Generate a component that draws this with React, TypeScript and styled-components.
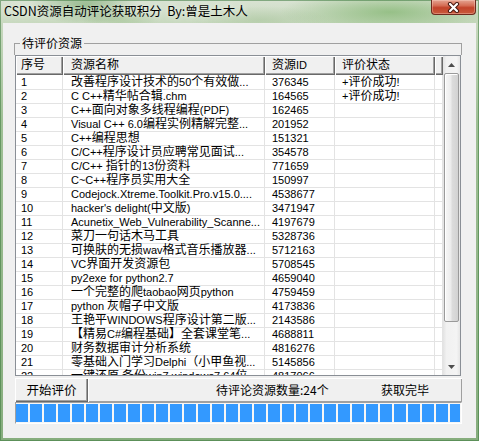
import React from 'react';
import styled, { createGlobalStyle } from 'styled-components';

const GlobalStyle = createGlobalStyle`
  html, body {
    margin: 0;
    padding: 0;
  }

  body {
    width: 479px;
    height: 441px;
    overflow: hidden;
    font-family: "Noto Sans CJK SC", "Liberation Sans", sans-serif;
    font-size: 12px;
    color: #000;
  }
`;

const Window = styled.div`
  width: 479px;
  height: 441px;
  box-sizing: border-box;
  padding: 0 3px 3px;
  display: flex;
  flex-direction: column;
  background:
    radial-gradient(ellipse 55px 18px at 85px 6px, rgba(86, 146, 74, 0.55), transparent),
    radial-gradient(ellipse 40px 12px at 120px 18px, rgba(120, 170, 100, 0.35), transparent),
    radial-gradient(ellipse 110px 22px at 390px 12px, rgba(112, 172, 92, 0.6), transparent),
    radial-gradient(ellipse 70px 14px at 260px 20px, rgba(150, 185, 135, 0.35), transparent),
    linear-gradient(180deg, #d9e3d3 0px, #c8d9bf 23px, #9fc095 120px, #86ad7d 100%);
  box-shadow: inset 0 0 0 1px rgba(58, 120, 60, 0.55);
`;

const TitleBar = styled.div`
  height: 23px;
  display: flex;
  align-items: flex-start;
  flex-shrink: 0;
`;

const Caption = styled.div`
  padding-left: 1px;
  line-height: 22px;
  font-size: 12.5px;
  white-space: pre;
  text-shadow: 0 0 6px rgba(255, 255, 255, 0.9);
`;

const CloseButton = styled.div`
  margin-left: auto;
  width: 45px;
  height: 15px;
  box-sizing: border-box;
  border: 1px solid #6e2a1e;
  border-top: none;
  border-radius: 0 0 4px 4px;
  background: linear-gradient(180deg, #e4a491 0%, #d56d55 40%, #c2432a 55%, #c85a3c 100%);
  box-shadow: inset 0 0 0 1px rgba(255, 220, 210, 0.35);
  display: flex;
  align-items: center;
  justify-content: center;
`;

const Client = styled.div`
  flex: 1;
  background: #f0f0f0;
  display: flex;
  flex-direction: column;
`;

const GroupBox = styled.fieldset`
  margin: 14px 0 0 11px;
  padding: 0 0 6px;
  width: 448px;
  box-sizing: border-box;
  border: 1px solid #a0a0a0;
  border-bottom: none;
  min-width: 0;
`;

const GroupTitle = styled.legend`
  margin-left: 5px;
  padding: 0 2px;
  font-size: 12px;
  line-height: 12px;
`;

const ListView = styled.div`
  margin-left: 12px;
  width: 446px;
  height: 321px;
  box-sizing: border-box;
  border: 1px solid #8a8f96;
  background: #fff;
  display: flex;
  overflow: hidden;
  font-family: "Liberation Sans", "Noto Sans CJK SC", sans-serif;
  font-size: 11px;
`;

const Han = styled.span`
  font-family: "Noto Sans CJK SC", sans-serif;
  font-size: 12px;
  line-height: 10px;
`;

const ListBody = styled.div`
  flex: 1;
  display: flex;
  flex-direction: column;
  overflow: hidden;
`;

const gridColumns = '47px 202px 70px 100px 1fr';

const HeaderRow = styled.div`
  display: grid;
  grid-template-columns: ${gridColumns};
  height: 19px;
  flex-shrink: 0;
`;

const HeadCell = styled.div<{ $pad: number }>`
  padding-left: ${(p) => p.$pad}px;
  background: #f0f0f0;
  box-shadow: inset 1px 1px 0 #ffffff, inset -1px -1px 0 #696969, inset -2px -2px 0 #a0a0a0;
  line-height: 18px;
  white-space: nowrap;
  overflow-x: clip;
  overflow-y: visible;
`;

const Row = styled.div`
  display: grid;
  grid-template-columns: ${gridColumns};
  height: 14px;
  flex-shrink: 0;
`;

const Cell = styled.div<{ $pad: number }>`
  padding-left: ${(p) => p.$pad}px;
  border-right: 1px solid #e3e3e3;
  border-bottom: 1px solid #e3e3e3;
  line-height: 14px;
  white-space: nowrap;
  overflow-x: clip;
  overflow-y: visible;
`;

const ScrollBar = styled.div`
  width: 17px;
  flex-shrink: 0;
  display: flex;
  flex-direction: column;
  background: linear-gradient(90deg, #e2e2e2 0%, #f1f1f1 20%, #f4f4f4 80%, #e6e6e6 100%);
`;

const ArrowButton = styled.div`
  height: 17px;
  display: flex;
  align-items: center;
  justify-content: center;
`;

const Thumb = styled.div`
  height: 249px;
  margin: 0 1px;
  box-sizing: border-box;
  border: 1px solid #9a9a9a;
  border-radius: 2px;
  background: linear-gradient(90deg, #f7f7f7 0%, #ececec 45%, #dcdcdc 55%, #d2d2d2 100%);
  box-shadow: inset 1px 1px 0 #ffffff;
`;

const TrackGap = styled.div`
  flex: 1;
`;

const ActionRow = styled.div`
  margin: 2px 0 0 12px;
  display: flex;
  height: 24px;
`;

const PushButton = styled.div`
  width: 73px;
  box-sizing: border-box;
  background: #f0f0f0;
  box-shadow: inset 1px 1px 0 #ffffff, inset -1px -1px 0 #696969, inset -2px -2px 0 #a0a0a0;
  display: flex;
  align-items: center;
  justify-content: center;
  font-size: 12.5px;
  padding-bottom: 1px;
`;

const StatusPanel = styled.div`
  width: 374px;
  box-sizing: border-box;
  background: #f0f0f0;
  box-shadow: inset 1px 1px 0 #ffffff, inset -1px -1px 0 #a0a0a0;
  display: flex;
  align-items: center;
  font-size: 12px;
  padding-bottom: 1px;
`;

const StatusText = styled.span<{ $left?: string; $right?: string }>`
  margin-left: ${(p) => p.$left ?? '0'};
  margin-right: ${(p) => p.$right ?? '0'};
`;

const Progress = styled.div`
  margin-left: 12px;
  width: 447px;
  height: 22px;
  box-sizing: border-box;
  padding: 1px 1px 1px 0;
  border: 1px solid;
  border-color: #a0a0a0 #ffffff #ffffff #a0a0a0;
  background: #f6f6f6;
`;

const ProgressFill = styled.div`
  height: 100%;
  background: repeating-linear-gradient(90deg, #3399ff 0 12px, transparent 12px 14px);
`;

const HAN = /([\u2e80-\u9fff\u3000-\u303f\uff00-\uffef]+)/;

// the list font is Tahoma-like for latin and a wider CJK face, as on the original
function Mixed({ text }: { text: string }) {
  return (
    <>
      {text
        .split(HAN)
        .map((part, i) =>
          part === '' ? null : HAN.test(part) ? <Han key={i}>{part}</Han> : part,
        )}
    </>
  );
}

const columns = [
  { title: '序号', pad: 5 },
  { title: '资源名称', pad: 8 },
  { title: '资源ID', pad: 7 },
  { title: '评价状态', pad: 7 },
];

const rows: [string, string, string][] = [
  ['改善程序设计技术的50个有效做...', '376345', '+评价成功!'],
  ['C C++精华帖合辑.chm', '164565', '+评价成功!'],
  ['C++面向对象多线程编程(PDF)', '162465', ''],
  ['Visual C++ 6.0编程实例精解完整...', '201952', ''],
  ['C++编程思想', '151321', ''],
  ['C/C++程序设计员应聘常见面试...', '354578', ''],
  ['C/C++ 指针的13份资料', '771659', ''],
  ['C~C++程序员实用大全', '150997', ''],
  ['Codejock.Xtreme.Toolkit.Pro.v15.0....', '4538677', ''],
  ["hacker's delight(中文版)", '3471947', ''],
  ['Acunetix_Web_Vulnerability_Scanne...', '4197679', ''],
  ['菜刀一句话木马工具', '5328736', ''],
  ['可换肤的无损wav格式音乐播放器...', '5712163', ''],
  ['VC界面开发资源包', '5708545', ''],
  ['py2exe for python2.7', '4659040', ''],
  ['一个完整的爬taobao网页python', '4759459', ''],
  ['python 灰帽子中文版', '4173836', ''],
  ['王艳平WINDOWS程序设计第二版...', '2143586', ''],
  ['【精易C#编程基础】全套课堂笔...', '4688811', ''],
  ['财务数据审计分析系统', '4816276', ''],
  ['零基础入门学习Delphi（小甲鱼视...', '5145856', ''],
  ['一键还原 备份win7 windows7 64位', '4817066', ''],
];

function Arrow({ down }: { down?: boolean }) {
  return (
    <svg width="7" height="4" viewBox="0 0 7 4">
      <path d={down ? 'M0 0 H7 L3.5 4 Z' : 'M0 4 H7 L3.5 0 Z'} fill="#4d4d4d" />
    </svg>
  );
}

function CloseGlyph() {
  return (
    <svg width="13" height="11" viewBox="0 0 13 11">
      <path d="M3 2 L10 9 M10 2 L3 9" stroke="#4a1a12" strokeWidth="4.2" strokeLinecap="round" />
      <path d="M3 2 L10 9 M10 2 L3 9" stroke="#ffffff" strokeWidth="2.2" strokeLinecap="round" />
    </svg>
  );
}

export default function App() {
  return (
    <>
      <GlobalStyle />
      <Window>
        <TitleBar>
          <Caption>{'CSDN资源自动评论获取积分  By:曾是土木人'}</Caption>
          <CloseButton>
            <CloseGlyph />
          </CloseButton>
        </TitleBar>
        <Client>
          <GroupBox>
            <GroupTitle>待评价资源</GroupTitle>
          </GroupBox>
          <ListView>
            <ListBody>
              <HeaderRow>
                {columns.map((c) => (
                  <HeadCell key={c.title} $pad={c.pad}>
                    <Mixed text={c.title} />
                  </HeadCell>
                ))}
                <HeadCell $pad={0} />
              </HeaderRow>
              {rows.map(([name, id, state], i) => (
                <Row key={id}>
                  <Cell $pad={columns[0].pad}>{i + 1}</Cell>
                  <Cell $pad={columns[1].pad}>
                    <Mixed text={name} />
                  </Cell>
                  <Cell $pad={columns[2].pad}>{id}</Cell>
                  <Cell $pad={columns[3].pad}>
                    <Mixed text={state} />
                  </Cell>
                  <Cell $pad={0} />
                </Row>
              ))}
            </ListBody>
            <ScrollBar>
              <ArrowButton>
                <Arrow />
              </ArrowButton>
              <Thumb />
              <TrackGap />
              <ArrowButton>
                <Arrow down />
              </ArrowButton>
            </ScrollBar>
          </ListView>
          <ActionRow>
            <PushButton>开始评价</PushButton>
            <StatusPanel>
              <StatusText $left="128px">待评论资源数量:24个</StatusText>
              <StatusText $left="auto" $right="33px">
                获取完毕
              </StatusText>
            </StatusPanel>
          </ActionRow>
          <Progress>
            <ProgressFill />
          </Progress>
        </Client>
      </Window>
    </>
  );
}
